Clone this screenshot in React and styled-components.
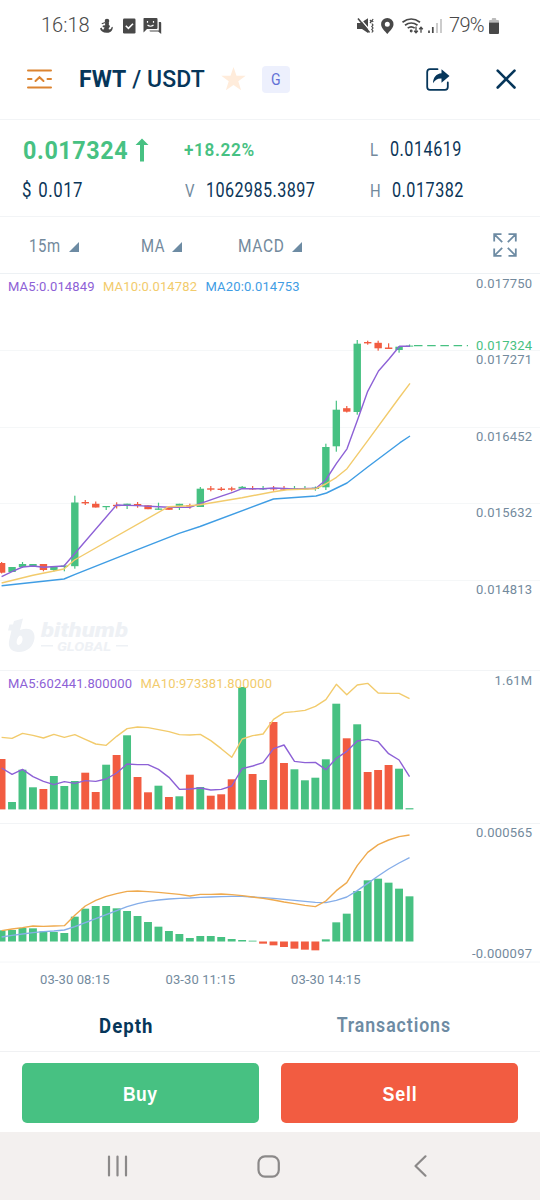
import React from "react";
import styled, { createGlobalStyle } from "styled-components";

const GREEN = "#47c182";
const RED = "#f25c41";
const NAVY = "#0b3558";
const GRAY = "#738a9d";
const PURPLE = "#8d61d6";
const YELLOW = "#f2cb6c";
const BLUE = "#3f9de4";

const GlobalStyle = createGlobalStyle`
  * {
    box-sizing: border-box;
  }
  body {
    margin: 0;
    background: #ffffff;
    font-family: Roboto, "Liberation Sans", sans-serif;
  }
`;

const Screen = styled.div`
  display: flex;
  flex-direction: column;
  width: 540px;
  height: 1200px;
  overflow: hidden;
  background: #ffffff;
`;

// 폭이 좁은 숫자/문자
const Narrow = styled.span`
  display: inline-block;
  white-space: nowrap;
  transform: scaleX(${(p) => p.$sx || 0.83});
  transform-origin: ${(p) => p.$origin || "left"} center;
  font-size: ${(p) => p.$size || 19.5}px;
  font-weight: ${(p) => p.$weight || 400};
  letter-spacing: ${(p) => p.$ls || 0}px;
  word-spacing: ${(p) => p.$ws || 0}px;
  color: ${(p) => p.$color || NAVY};
  line-height: 24px;
`;

// 상태바
const StatusBar = styled.div`
  display: flex;
  align-items: center;
  justify-content: space-between;
  height: 40px;
  padding: 11px 41px 0 41px;
  color: #484848;
`;

const StatusGroup = styled.div`
  display: flex;
  align-items: center;
  height: 29px;
`;

const StatusText = styled.span`
  width: ${(p) => p.$w}px;
  margin-left: ${(p) => p.$ml || 0}px;
  font-size: 20px;
  font-weight: 300;
  letter-spacing: ${(p) => p.$ls || 0}px;
  line-height: 29px;
  white-space: nowrap;
`;

const Icon = styled.svg`
  display: block;
  flex: none;
  margin-left: ${(p) => p.$ml || 0}px;
  overflow: visible;
`;

// 헤더
const Header = styled.div`
  display: flex;
  align-items: center;
  height: 80px;
  padding: 0 24px 1px 27px;
  border-bottom: 1px solid #f2f4f6;
`;

const PairName = styled.h1`
  width: 126px;
  margin: 1px 0 0 27px;
  font-size: 23px;
  font-weight: 500;
  line-height: 30px;
  letter-spacing: 0.08px;
  white-space: nowrap;
  color: #06365a;

  b {
    font-weight: 700;
  }
`;

const Badge = styled.span`
  display: flex;
  align-items: center;
  justify-content: center;
  width: 28px;
  height: 27px;
  margin-left: 16px;
  margin-right: auto;
  border-radius: 4px;
  background: #edf0fd;
`;

// 시세 정보
const Info = styled.div`
  display: grid;
  grid-template-columns: 162px 185px 1fr;
  grid-template-rows: 40px 42px;
  align-items: center;
  align-content: start;
  height: 97px;
  padding: 10px 0 0 22px;
  border-bottom: 1px solid #f2f4f6;
`;

const InfoCell = styled.div`
  display: flex;
  align-items: center;
  height: 40px;
`;

const InfoLabel = styled.span`
  width: ${(p) => p.$w}px;
  padding-left: 1px;
`;

const PriceBox = styled.div`
  width: 113px;
  padding-left: 1px;
`;

// 지표 선택
const Toolbar = styled.div`
  display: flex;
  align-items: center;
  height: 57px;
  padding: 2px 23px 0 29px;
  border-bottom: 1px solid #edf1f4;
`;

const Picker = styled.div`
  display: flex;
  align-items: center;
  width: ${(p) => p.$w}px;
`;

const PickerLabel = styled.div`
  width: ${(p) => p.$w}px;
`;

const ExpandBox = styled.div`
  margin-left: auto;
  padding-bottom: 3px;
`;

const Chart = styled.svg`
  display: block;
  flex: none;
  width: 540px;
  height: ${(p) => p.$h}px;
  font-family: Roboto, "Liberation Sans", sans-serif;
  font-size: 13px;
`;

// 하단 탭
const Tabs = styled.div`
  display: grid;
  grid-template-columns: 252px 1fr;
  align-items: center;
  height: 57px;
  padding-top: 6px;
  border-bottom: 1px solid #f0f1f3;
`;

const Tab = styled.div`
  text-align: center;
  padding-right: ${(p) => p.$pr || 0}px;
`;

const Actions = styled.div`
  display: grid;
  grid-template-columns: 1fr 1fr;
  gap: 22px;
  height: 80px;
  padding: 11px 22px 9px;
`;

const ActionButton = styled.button`
  border: 0;
  border-radius: 5px;
  padding: 2px 0 0;
  background: ${(p) => p.$bg};
`;

const NavBar = styled.div`
  display: flex;
  align-items: center;
  flex: 1;
  padding: 0 0 0 107px;
  background: #f3f0ef;
`;

const step = 10.46;
const cx = (i) => 1.6 + step * i;

// [몸통 위, 몸통 아래, 꼬리 위, 꼬리 아래, 상승 여부]
const candles = [
  [563, 572.7, 562, 573.5, 0],
  [567, 572, 567, 572, 1],
  [564, 567, 562, 568, 1],
  [564, 566, 564, 566, 1],
  [564, 570, 564, 571.3, 0],
  [566.7, 570, 566, 571.5, 1],
  [565.5, 567, 564.7, 571.3, 1],
  [502.5, 566.2, 495.7, 568.7, 1],
  [502, 503.4, 500, 505, 0],
  [503.8, 507.5, 501.5, 507.5, 0],
  [506, 507.2, 506, 510, 1],
  [504.8, 506.2, 502.3, 508.5, 0],
  [503.7, 505.6, 503.7, 509, 1],
  [504, 505.8, 502, 507.7, 0],
  [505.3, 509.2, 505.3, 509.2, 0],
  [508.5, 509.8, 502.7, 509.8, 1],
  [507, 509.8, 507, 509.8, 0],
  [503.8, 505.8, 503.8, 510, 1],
  [505, 506.6, 503.7, 508.7, 0],
  [488.7, 507, 487, 507, 1],
  [488.3, 489.7, 486, 491.3, 0],
  [488.6, 490, 487, 491, 0],
  [488.3, 489.7, 486.7, 491.3, 0],
  [486.8, 488.6, 486, 489, 1],
  [488.3, 489.4, 486, 490, 0],
  [488.2, 489.4, 486, 490, 1],
  [488.2, 489.4, 486, 490.7, 0],
  [488.4, 489.6, 486, 490, 0],
  [488.4, 489.6, 486, 490, 1],
  [488.2, 489.4, 486, 490, 1],
  [487.6, 489, 486.5, 490.7, 1],
  [447, 487.3, 443.7, 490, 1],
  [409.7, 446.3, 400.7, 451.7, 1],
  [408.2, 411.7, 406, 412.5, 0],
  [343.7, 412, 340, 414.7, 1],
  [342, 343.4, 340.7, 344.7, 0],
  [342.8, 348.3, 340.7, 350.7, 0],
  [347.5, 349, 343.3, 349, 0],
  [346.7, 350, 346, 352.7, 1],
  [345.6, 346.6, 344.5, 346.6, 1],
];

const ma5 = [
  [1.6, 576.7], [12, 571.7], [22.5, 567], [33, 566], [43.5, 567.3], [64, 566],
  [116.5, 505], [137.5, 505.6], [158.5, 506.7], [169, 507.3], [190, 507.4],
  [200, 503.7], [220.7, 496.3], [232.7, 492.3], [242, 488.7], [263, 488.7],
  [273.5, 488], [294.5, 489], [316, 488.3], [325.7, 480], [336.5, 463.3],
  [347, 448.8], [357.5, 420], [367.7, 391.3], [378.5, 371], [389, 359],
  [399.5, 346.3], [410, 346.3],
];
const ma10 = [
  [1.6, 583], [33, 575.3], [64, 569], [74.5, 560], [168.5, 506.7], [190, 505.7],
  [200, 504.7], [242, 497.7], [273.5, 491.7], [287, 489.7], [316, 488.7],
  [325.7, 484], [336.5, 477.3], [347, 468.7], [367, 441.7], [399, 398], [410, 383.3],
];
const ma20 = [
  [1.6, 585.7], [64, 579], [74.5, 574.7], [137.5, 549.7], [179, 533.3],
  [200, 526.5], [273.5, 499], [316, 496], [326.5, 493], [347, 483],
  [368, 466.7], [400, 442.7], [410, 436],
];

const volumes = [
  759, 802, 769.7, 787.3, 789, 776, 786, 781, 772.7, 792, 764.7, 755, 735.3, 777,
  792.3, 785.7, 797, 796.3, 774.7, 787, 795.7, 794.3, 779.3, 687, 774, 780, 722,
  763, 769.3, 780.3, 777.7, 759.3, 703.7, 738.3, 724.3, 772, 770, 765, 768.7, 808.2,
];
const volumeUp = "0111011100101001010100010100111110100011";
// 3배 좌표
const volMa5 = [
  294, 313, 298, 320, 334, 344, 335, 340, 332, 334, 327, 309, 282, 284, 284, 298,
  322, 358, 357, 354, 360, 358, 348, 296, 288, 278, 236, 225, 274, 278, 277, 299,
  265, 244, 213, 208, 215, 251, 270, 320,
];
const volMa10 = [
  202, 205, 190, 196, 204, 193, 202, 194, 208, 222, 226, 199, 176, 171, 173, 179,
  185, 194, 195, 193, 212, 236, 262, 207, 197, 192, 148, 128, 125, 121, 109, 89,
  43, 74, 45, 40, 69, 70, 70, 86,
];
const macd = [
  331, 330, 324, 325, 334, 336, 339, 290, 266, 258, 258, 265, 273, 288, 306, 320,
  333, 342, 354, 348, 348, 351, 357, 360, 362, 371, 376, 381, 386, 389, 391, 358,
  307, 281, 213, 181, 176, 188, 206, 229,
];
const dif = [
  332, 327, 323, 318, 319, 318, 317, 286, 258, 241, 229, 221, 214, 213, 215, 217,
  220, 223, 228, 223, 223, 222, 224, 227, 231, 235, 240, 246, 251, 256, 260, 243,
  212, 188, 137, 97, 74, 60, 50, 45,
];
const dea = [
  351, 346, 342, 338, 335, 333, 330, 320, 308, 296, 284, 272, 260, 251, 244, 240,
  237, 235, 234, 232, 231, 230, 229, 229, 231, 233, 235, 238, 241, 244, 247, 248,
  241, 231, 212, 190, 168, 147, 129, 113,
];

const toPoints = (arr) => arr.map((p) => p.join(",")).join(" ");
const series = (arr, base) => toPoints(arr.map((v, i) => [cx(i), base + v / 3]));

const Line = ({ points, color }) => (
  <polyline points={points} fill="none" stroke={color} strokeWidth="1.4" strokeLinejoin="round" />
);

const AxisLabel = ({ y, w = 56, color = GRAY, children }) => (
  <text x={532 - w} y={y} textLength={w} fill={color}>
    {children}
  </text>
);

const Triangle = () => (
  <Icon width="11" height="11" viewBox="0 0 11 11">
    <path d="M10 1v10H0z" fill="#6d8ba3" />
  </Icon>
);

const PriceChart = () => (
  <Chart $h={397} viewBox="0 274 540 397">
    {[350.5, 427.5, 503.5, 580.5].map((y) => (
      <path key={y} d={`M0 ${y}H540`} stroke="#f5f7f8" />
    ))}
    <g fill="#eef1f5">
      <path d="M14 621l9-2.500-3 11.500c9-3 15 0 14.500 8-.8 9-8 14.500-16.500 14-8-.5-10.500-6-8.500-13l2-8.500H8l1.500-6h3.500zM20 635.500c-3 1.500-5 9-1.500 9.500 4 0 6-9 1.500-9.500z" fillRule="evenodd" />
      <text x="41" y="636.5" fontSize="20" fontWeight="900" fontStyle="italic" textLength="87" lengthAdjust="spacingAndGlyphs">
        bithumb
      </text>
      <text x="57" y="651" fontSize="12.5" fontWeight="700" fontStyle="italic" textLength="54" lengthAdjust="spacingAndGlyphs">
        GLOBAL
      </text>
      <path d="M41 645h12v1.600H41zM116 645h12v1.600h-12z" />
    </g>
    {candles.map(([top, bottom, high, low, up], i) => (
      <g key={i} fill={up ? GREEN : RED}>
        <rect x={cx(i) - 3.7} y={top} width="7.4" height={bottom - top} />
        <rect x={cx(i) - 0.6} y={high} width="1.2" height={low - high} />
      </g>
    ))}
    <Line points={toPoints(ma5)} color={PURPLE} />
    <Line points={toPoints(ma10)} color={YELLOW} />
    <Line points={toPoints(ma20)} color={BLUE} />
    <path d="M414 345.600H468" stroke={GREEN} strokeWidth="1.400" strokeDasharray="8.500 4.700" />
    <text x="8" y="291" textLength="86.5" fill={PURPLE}>MA5:0.014849</text>
    <text x="103" y="291" textLength="94" fill={YELLOW}>MA10:0.014782</text>
    <text x="205.5" y="291" textLength="94" fill={BLUE}>MA20:0.014753</text>
    <AxisLabel y={287.5}>0.017750</AxisLabel>
    <AxisLabel y={364}>0.017271</AxisLabel>
    <AxisLabel y={350.3} color={GREEN}>0.017324</AxisLabel>
    <AxisLabel y={440.5}>0.016452</AxisLabel>
    <AxisLabel y={517}>0.015632</AxisLabel>
    <AxisLabel y={593.7}>0.014813</AxisLabel>
    <path d="M0 670.5H540" stroke="#f2f4f6" />
  </Chart>
);

const VolumeChart = () => (
  <Chart $h={153} viewBox="0 671 540 153">
    {volumes.map((y, i) => (
      <rect key={i} x={cx(i) - 4} y={y} width="7.9" height={809.4 - y} fill={volumeUp[i] === "1" ? GREEN : RED} />
    ))}
    <Line points={series(volMa5, 670)} color={PURPLE} />
    <Line points={series(volMa10, 670)} color={YELLOW} />
    <text x="8" y="688" textLength="124" fill={PURPLE}>MA5:602441.800000</text>
    <text x="140.5" y="688" textLength="131.5" fill={YELLOW}>MA10:973381.800000</text>
    <AxisLabel y={684.5} w={37.5}>1.61M</AxisLabel>
    <path d="M0 823.5H540" stroke="#f2f4f6" />
  </Chart>
);

const MacdChart = () => (
  <Chart $h={171} viewBox="0 824 540 171">
    {macd.map((v, i) => {
      const y = 820 + v / 3;
      const up = y < 941.5;
      return (
        <rect
          key={i}
          x={cx(i) - 4}
          y={up ? y : 941.5}
          width="7.9"
          height={Math.abs(941.5 - y)}
          fill={up ? GREEN : RED}
        />
      );
    })}
    <Line points={series(dea, 820)} color="#86aee9" />
    <Line points={series(dif, 820)} color="#efaa4e" />
    <AxisLabel y={837}>0.000565</AxisLabel>
    <AxisLabel y={957.7} w={60}>-0.000097</AxisLabel>
    <path d="M0 962H540" stroke="#f4f6f8" />
    <text x="40" y="983.7" textLength="69.5" fill={GRAY}>03-30 08:15</text>
    <text x="165.5" y="983.7" textLength="69.5" fill={GRAY}>03-30 11:15</text>
    <text x="291" y="983.7" textLength="69.5" fill={GRAY}>03-30 14:15</text>
  </Chart>
);

const App = () => {
  return (
    <>
      <GlobalStyle />
      <Screen>
        <StatusBar>
          <StatusGroup>
            <StatusText $w={58.5}>16:18</StatusText>
            <Icon width="13" height="16" viewBox="0 0 13 16" fill="#484848">
              <circle cx="7" cy="3" r="2.300" />
              <path d="M5 4.500h4L8.800 7l1.300 1-1.600 3 1 .5c1.200-.2 2-1.100 2-2.200l1.200-.6c.4 3.300-1.800 5.800-5.500 6.100C3.200 15 .7 13.200 0 10.500l1.600-1c.3 1.200.9 1.900 1.700 2.200L4.600 9.500 2.500 9l.4-1.500 2.300-.2z" />
              <path d="M1.800 5.800l3.400-1.300" stroke="#484848" strokeWidth="1.200" />
            </Icon>
            <Icon $ml={10} width="13" height="16" viewBox="0 0 13 16">
              <rect y=".5" width="12.500" height="15" rx="1.200" fill="#484848" />
              <path d="M2.800 7.800l2.600 2.600 4.600-4.700" fill="none" stroke="#fff" strokeWidth="1.600" />
            </Icon>
            <Icon $ml={7.500} width="18" height="16" viewBox="0 0 18 16" fill="#484848">
              <path d="M1 0h12.500q1 0 1 1v9q0 1-1 1H4L.500 14.500V1Q.500 0 1 0z" />
              <path d="M15.800 4h1.700q.7 0 .7 1v11l-3-2.500H7.500q-1 0-1-1h9.300z" />
              <path d="M4.500 3v1.800M10.500 3v1.800M4.500 7q3 2.500 6 0" fill="none" stroke="#fff" strokeWidth="1.200" />
            </Icon>
          </StatusGroup>
          <StatusGroup>
            <Icon width="17" height="16" viewBox="0 0 17 16" fill="#484848">
              <path d="M0 5h3.500L11 .3V15L5 11H0z" />
              <path d="M2.500 0l11 13" stroke="#fff" strokeWidth="1.300" />
              <path d="M1 .5l11.500 14" stroke="#484848" strokeWidth="1.600" />
              <path d="M13 2l1.300 1.500L13 5M14.800 5.500l1.200 1.500-1.200 1.500 1.200 1.500-1.200 1.500 1.200 1.500-1.200 1.500M16.200 1l-1.200 1.500 1.200 1.500" fill="none" stroke="#484848" strokeWidth="1.200" />
            </Icon>
            <Icon $ml={7} width="13" height="16" viewBox="0 0 13 16">
              <path d="M6.300 0a6.200 6.200 0 0 0-6.200 6.200C.1 10 4 13 6.300 16c2.300-3 6.200-6 6.200-9.800A6.200 6.200 0 0 0 6.300 0zm0 3.800a2.500 2.500 0 1 1 0 5 2.500 2.500 0 0 1 0-5z" fill="#484848" />
            </Icon>
            <Icon $ml={7.500} width="22" height="16" viewBox="0 0 22 16" fill="none" stroke="#484848" strokeWidth="1.700">
              <path d="M.5 4.200q8.700-6.400 17.500 0M3 7.300q6.300-4.600 12.500 0M5.700 10.200q3.500-2.700 7 0" />
              <circle cx="9.200" cy="13" r=".6" />
              <path d="M14 8.500v6M12.200 12.700L14 14.700l1.800-2M19 14.700v-5M17.200 11.300L19 9.300l1.800 2" strokeWidth="1.300" />
            </Icon>
            <Icon $ml={4.500} width="15" height="16" viewBox="0 0 15 16">
              <path d="M1 12.500V15M4.800 9v6" stroke="#484848" strokeWidth="1.700" />
              <path d="M9 5v10M13 1v14" stroke="#c4c4c4" strokeWidth="1.700" />
            </Icon>
            <StatusText $w={40} $ml={6} $ls={-0.7}>79%</StatusText>
            <Icon width="10" height="16" viewBox="0 0 10 16">
              <path d="M0 4.500V3q0-1 1-1h1.800V1q0-1 1-1h2.400q1 0 1 1v1H9q1 0 1 1v1.500z" fill="#bbb" />
              <path d="M0 4.500h10V15q0 1-1 1H1q-1 0-1-1z" fill="#484848" />
            </Icon>
          </StatusGroup>
        </StatusBar>

        <Header>
          <Icon width="25" height="20" viewBox="0 0 25 20" fill="none" stroke="#dc8431" strokeWidth="2" strokeLinecap="round">
            <path d="M1 1.500h23M1 18.500h23M1 10h3.500M20.500 10H24M8.500 12l4-3.800 4 3.800" />
          </Icon>
          <PairName>
            <b>FWT</b> / USDT
          </PairName>
          <Icon $ml={16} width="25" height="24" viewBox="0 0 25 24">
            <path d="M12.500 0l3 8.800h9.200l-7.400 5.500 2.800 9L12.500 18l-7.600 5.300 2.800-9L.3 8.800h9.200z" fill="#ffecdb" />
          </Icon>
          <Badge>
            <Narrow $origin="center" $size={17} $color="#6270d6">G</Narrow>
          </Badge>
          <Icon width="24" height="23" viewBox="0 0 24 23">
            <path d="M11.500 1.200H4Q1.200 1.200 1.200 4v15q0 2.800 2.800 2.800h15q2.800 0 2.800-2.800v-4.500" fill="none" stroke="#06365a" strokeWidth="1.800" strokeLinecap="round" />
            <path d="M15.500 1.200L23.500 8l-8 6.700v-4.200c-4-.2-6.500 1.500-8.500 4.800.2-6 3.300-9.600 8.500-10z" fill="#06365a" />
          </Icon>
          <Icon $ml={46} width="20" height="20" viewBox="0 0 20 20">
            <path d="M1.700 1.700l16.800 16.800M18.500 1.700L1.700 18.500" stroke="#06365a" strokeWidth="2.600" strokeLinecap="round" />
          </Icon>
        </Header>

        <Info>
          <InfoCell>
            <PriceBox>
              <Narrow $size={26.5} $weight={700} $sx={0.88} $ls={0.7} $color={GREEN}>0.017324</Narrow>
            </PriceBox>
            <Icon width="14" height="24" viewBox="0 0 14 24">
              <path d="M7 .5L13.500 7H9v16.500H5V7H.5z" fill={GREEN} />
            </Icon>
          </InfoCell>
          <InfoCell>
            <Narrow $size={18.5} $weight={600} $sx={0.93} $ls={0.7} $color={GREEN}>+18.22%</Narrow>
          </InfoCell>
          <InfoCell>
            <InfoLabel $w={21}>
              <Narrow $size={18} $color={GRAY}>L</Narrow>
            </InfoLabel>
            <Narrow $ls={0.6}>0.014619</Narrow>
          </InfoCell>
          <InfoCell>
            <Narrow $sx={0.86} $ls={0.6} $ws={2}>$ 0.017</Narrow>
          </InfoCell>
          <InfoCell>
            <InfoLabel $w={22}>
              <Narrow $size={18} $color={GRAY}>V</Narrow>
            </InfoLabel>
            <Narrow $ls={0.5}>1062985.3897</Narrow>
          </InfoCell>
          <InfoCell>
            <InfoLabel $w={23}>
              <Narrow $size={18} $color={GRAY}>H</Narrow>
            </InfoLabel>
            <Narrow $ls={0.6}>0.017382</Narrow>
          </InfoCell>
        </Info>

        <Toolbar>
          <Picker $w={112}>
            <PickerLabel $w={40}>
              <Narrow $size={18} $ls={0.8} $color={GRAY}>15m</Narrow>
            </PickerLabel>
            <Triangle />
          </Picker>
          <Picker $w={97}>
            <PickerLabel $w={31}>
              <Narrow $size={18} $ls={0.8} $color={GRAY}>MA</Narrow>
            </PickerLabel>
            <Triangle />
          </Picker>
          <Picker $w={70}>
            <PickerLabel $w={54}>
              <Narrow $size={18} $sx={0.86} $ls={0.8} $color={GRAY}>MACD</Narrow>
            </PickerLabel>
            <Triangle />
          </Picker>
          <ExpandBox>
            <Icon width="24" height="24" viewBox="0 0 24 24" fill="none" stroke="#6d8ba3" strokeWidth="1.800">
              <path d="M1.200 8.500V1.200h7.300M1.200 1.200l8 8M15.500 1.200h7.300v7.300M22.800 1.200l-8 8M1.200 15.500v7.300h7.300M1.200 22.800l8-8M22.800 15.500v7.300h-7.300M22.800 22.800l-8-8" />
            </Icon>
          </ExpandBox>
        </Toolbar>

        <PriceChart />
        <VolumeChart />
        <MacdChart />

        <Tabs>
          <Tab>
            <Narrow $origin="center" $size={20} $weight={700} $sx={0.93} $ls={1.1} $color="#06365a">Depth</Narrow>
          </Tab>
          <Tab $pr={4}>
            <Narrow $origin="center" $size={19.5} $weight={600} $sx={0.91} $ls={1} $color="#6d8ba3">Transactions</Narrow>
          </Tab>
        </Tabs>

        <Actions>
          <ActionButton $bg={GREEN}>
            <Narrow $origin="center" $size={19.5} $weight={700} $sx={0.9} $ls={0.5} $color="#fff">Buy</Narrow>
          </ActionButton>
          <ActionButton $bg={RED}>
            <Narrow $origin="center" $size={19.5} $weight={700} $sx={0.92} $ls={0.8} $color="#fff">Sell</Narrow>
          </ActionButton>
        </Actions>

        <NavBar>
          <Icon width="22" height="22" viewBox="0 0 22 22" stroke="#8b8989" strokeWidth="2.200" strokeLinecap="round">
            <path d="M2 1.500v19M10.500 1.500v19M19 1.500v19" />
          </Icon>
          <Icon $ml={128} width="23" height="23" viewBox="0 0 23 23" fill="none" stroke="#8b8989" strokeWidth="2.200">
            <rect x="1.500" y="1.300" width="20.300" height="20.300" rx="6.500" />
          </Icon>
          <Icon $ml={134} width="13" height="22" viewBox="0 0 13 22" fill="none" stroke="#8b8989" strokeWidth="2.200" strokeLinecap="round" strokeLinejoin="round">
            <path d="M11.500 1.300L1.500 11l10 9.700" />
          </Icon>
        </NavBar>
      </Screen>
    </>
  );
};

export default App;
